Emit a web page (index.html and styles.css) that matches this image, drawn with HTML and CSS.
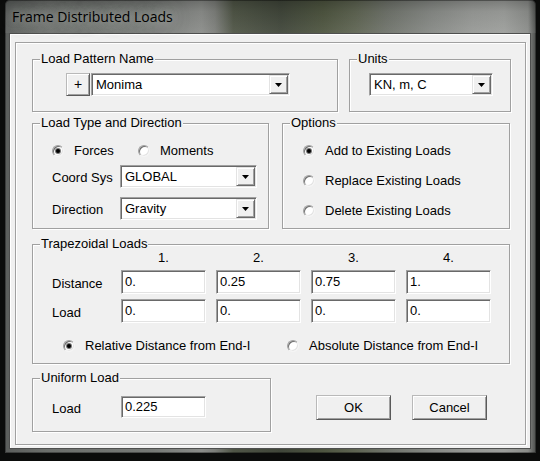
FILE: index.html
```html
<!DOCTYPE html>
<html>
<head>
<meta charset="utf-8">
<title>Frame Distributed Loads</title>
<link rel="stylesheet" href="styles.css">
</head>
<body>
<div class="window">
  <div class="titlebar"><span class="title">Frame Distributed Loads</span></div>
  <div class="client">
    <div class="panel">
      <div class="row row1">
        <div class="group g-pattern">
          <span class="glabel">Load Pattern Name</span>
          <div class="pattern-row">
            <button class="btn plus">+</button>
            <div class="combo c-pattern"><span class="ctext">Monima</span><span class="dd"><svg width="7" height="4" viewBox="0 0 7 4"><polygon points="0,0 7,0 3.5,4" fill="#000"/></svg></span></div>
          </div>
        </div>
        <div class="group g-units">
          <span class="glabel">Units</span>
          <div class="combo c-units"><span class="ctext">KN, m, C</span><span class="dd"><svg width="7" height="4" viewBox="0 0 7 4"><polygon points="0,0 7,0 3.5,4" fill="#000"/></svg></span></div>
        </div>
      </div>

      <div class="row row2">
        <div class="group g-type">
          <span class="glabel">Load Type and Direction</span>
          <div class="radio-line">
            <div class="radio r-forces"><span class="rb on"></span><span>Forces</span></div>
            <div class="radio"><span class="rb"></span><span>Moments</span></div>
          </div>
          <div class="form-row fr-coord">
            <span class="flabel">Coord Sys</span>
            <div class="combo c-small"><span class="ctext">GLOBAL</span><span class="dd"><svg width="7" height="4" viewBox="0 0 7 4"><polygon points="0,0 7,0 3.5,4" fill="#000"/></svg></span></div>
          </div>
          <div class="form-row fr-dir">
            <span class="flabel">Direction</span>
            <div class="combo c-small"><span class="ctext">Gravity</span><span class="dd"><svg width="7" height="4" viewBox="0 0 7 4"><polygon points="0,0 7,0 3.5,4" fill="#000"/></svg></span></div>
          </div>
        </div>
        <div class="group g-options">
          <span class="glabel">Options</span>
          <div class="radio-col">
            <div class="radio"><span class="rb on"></span><span>Add to Existing Loads</span></div>
            <div class="radio"><span class="rb"></span><span>Replace Existing Loads</span></div>
            <div class="radio"><span class="rb"></span><span>Delete Existing Loads</span></div>
          </div>
        </div>
      </div>

      <div class="group g-trap">
        <span class="glabel">Trapezoidal Loads</span>
        <div class="trap-grid">
          <span></span>
          <span class="colhead">1.</span>
          <span class="colhead">2.</span>
          <span class="colhead">3.</span>
          <span class="colhead">4.</span>
          <span class="flabel">Distance</span>
          <span class="field">0.</span>
          <span class="field">0.25</span>
          <span class="field">0.75</span>
          <span class="field">1.</span>
          <span class="flabel flabel-low">Load</span>
          <span class="field">0.</span>
          <span class="field">0.</span>
          <span class="field">0.</span>
          <span class="field">0.</span>
        </div>
        <div class="radio-line trap-radios">
          <div class="radio r-rel"><span class="rb on"></span><span>Relative Distance from End-I</span></div>
          <div class="radio"><span class="rb"></span><span>Absolute Distance from End-I</span></div>
        </div>
      </div>

      <div class="row row4">
        <div class="group g-uniform">
          <span class="glabel">Uniform Load</span>
          <div class="form-row">
            <span class="flabel flabel-low">Load</span>
            <span class="field field-short">0.225</span>
          </div>
        </div>
        <div class="buttons">
          <button class="btn action">OK</button>
          <button class="btn action">Cancel</button>
        </div>
      </div>
    </div>
  </div>
</div>
</body>
</html>
```

FILE: styles.css
```css
* {
  box-sizing: border-box;
}

html, body {
  margin: 0;
  padding: 0;
}

body {
  background: #0b0c0b;
  width: 540px;
  height: 461px;
  overflow: hidden;
  font-family: "Liberation Sans", Arial, sans-serif;
  font-size: 13px;
  color: #000;
}

.window {
  margin-left: 5px;
  width: 531px;
  height: 453px;
  padding: 0 5px 4px 4px;
  border-radius: 5px 5px 0 0;
  background: linear-gradient(to right,
    #5b5e5c 0%, #6c6f6c 8%, #777a77 28%, #8a8c89 37%, #7c7e7a 39.5%,
    #4f5546 43%, #40463a 52%, #4e5540 60%, #5e6452 66%, #6f736b 72%,
    #858884 80%, #979996 88%, #9c9e9b 94%, #8a8c89 98.5%, #4a4c4a 100%);
  box-shadow: inset 0 0 0 1px rgba(0, 0, 0, 0.35);
}

.titlebar {
  height: 33px;
  margin: 0 -5px 0 -4px;
  padding: 7px 0 0 7px;
  background: linear-gradient(to bottom, rgba(0,0,0,0.22) 0%, rgba(0,0,0,0.05) 35%, rgba(255,255,255,0.06) 100%);
}

.title {
  font-family: "Open Sans", "Noto Sans", sans-serif;
  font-size: 14px;
  line-height: 19px;
  color: #000;
  text-shadow: 0 0 10px rgba(200, 202, 200, 0.85), 0 0 18px rgba(190, 192, 190, 0.6);
}

.client {
  height: 416px;
  border: 1px solid #4e4f4e;
  background: #f0f0f0;
  box-shadow: inset 1px 1px 0 #fff;
  padding: 8px 4px 3px 5px;
}

.panel {
  width: 511px;
  height: 403px;
  border: 1px solid #a0a0a0;
  box-shadow: inset 1px 1px 0 #fff, 1px 1px 0 #fff;
  padding: 16px 0 0 16px;
}

.row {
  display: flex;
  align-items: flex-start;
}

.row1 { gap: 11px; }
.row2 { gap: 13px; margin-top: 11px; }
.row4 { margin-top: 14px; }

.group {
  position: relative;
  border: 1px solid #a0a0a0;
  box-shadow: inset 1px 1px 0 #fff, 1px 1px 0 #fff;
}

.glabel {
  position: absolute;
  top: -9px;
  left: 7px;
  padding: 0 1px;
  background: #f0f0f0;
  line-height: 15px;
  white-space: nowrap;
}

/* Load pattern */
.g-pattern {
  width: 306px;
  height: 53px;
  padding: 13px 0 0 33px;
}

.pattern-row {
  display: flex;
  gap: 1px;
}

.g-units {
  width: 162px;
  height: 53px;
  padding: 13px 0 0 19px;
}

/* Buttons */
.btn {
  font-family: "Liberation Sans", Arial, sans-serif;
  font-size: 13px;
  color: #000;
  background: #f0f0f0;
  margin: 0;
  padding: 0;
  border: 1px solid;
  border-color: #b9b9b9 #5a5a5a #5a5a5a #b9b9b9;
  box-shadow: inset 1px 1px 0 #fff, inset -1px -1px 0 #a0a0a0;
  border-radius: 0;
  display: flex;
  align-items: center;
  justify-content: center;
}

.plus {
  width: 24px;
  height: 23px;
  font-size: 14px;
  line-height: 1;
  padding-bottom: 1px;
}

/* Combo boxes */
.combo {
  display: flex;
  height: 23px;
  border: 1px solid;
  border-color: #a0a0a0 #fff #fff #a0a0a0;
  box-shadow: inset 1px 1px 0 #696969, inset -1px -1px 0 #e3e3e3;
  background: #fff;
  padding: 1px;
}

.c-pattern { width: 199px; }
.c-units { width: 124px; }
.c-small { width: 137px; }

.ctext {
  flex: 1;
  line-height: 19px;
  padding-left: 3px;
  white-space: nowrap;
  overflow: hidden;
}

.dd {
  width: 19px;
  height: 19px;
  background: #f0f0f0;
  border: 1px solid;
  border-color: #e3e3e3 #696969 #696969 #e3e3e3;
  box-shadow: inset 1px 1px 0 #fff, inset -1px -1px 0 #a0a0a0;
  display: flex;
  align-items: center;
  justify-content: center;
}

.dd svg {
  display: block;
  margin-top: 1px;
}

/* Radios */
.radio {
  display: flex;
  align-items: center;
  gap: 10px;
  height: 16px;
  line-height: 16px;
  white-space: nowrap;
}

.rb {
  width: 12px;
  height: 12px;
  flex: none;
  border-radius: 50%;
  background: #fff;
  border: 1px solid;
  border-color: #a0a0a0 #f4f4f4 #f4f4f4 #a0a0a0;
  box-shadow: inset 1px 1px 0 #6e6e6e, inset -1px -1px 0 #e3e3e3;
  display: flex;
  align-items: center;
  justify-content: center;
}

.rb.on::after {
  content: "";
  width: 4px;
  height: 4px;
  border-radius: 50%;
  background: #000;
  box-shadow: 0 0 0 1px rgba(0, 0, 0, 0.55);
}

.radio-line {
  display: flex;
}

/* Load type */
.g-type {
  width: 237px;
  height: 106px;
  padding: 19px 0 0 19px;
}

.r-forces { width: 86px; }

.form-row {
  display: flex;
  align-items: center;
}

.fr-coord { margin-top: 6px; }
.fr-dir { margin-top: 9px; }

.flabel {
  width: 68px;
  flex: none;
  line-height: 15px;
  padding-top: 2px;
  white-space: nowrap;
}

.flabel-low { padding-top: 3px; }

/* Options */
.g-options {
  width: 228px;
  height: 106px;
  padding: 19px 0 0 20px;
}

.radio-col {
  display: flex;
  flex-direction: column;
  gap: 14px;
}

/* Trapezoidal */
.g-trap {
  width: 478px;
  height: 120px;
  margin-top: 15px;
  padding: 5px 0 0 19px;
}

.trap-grid {
  display: grid;
  grid-template-columns: 69px repeat(4, 95px);
  grid-template-rows: 15px 24px 24px;
  row-gap: 5px;
  align-items: center;
}

.trap-grid .flabel {
  width: auto;
}

.colhead {
  width: 85px;
  text-align: center;
  line-height: 15px;
}

.field {
  display: block;
  width: 85px;
  height: 24px;
  border: 1px solid;
  border-color: #a0a0a0 #fff #fff #a0a0a0;
  box-shadow: inset 1px 1px 0 #696969, inset -1px -1px 0 #e3e3e3;
  background: #fff;
  padding: 0 3px;
  line-height: 22px;
  white-space: nowrap;
}

.trap-radios {
  margin-top: 15px;
  padding-left: 11px;
}

.r-rel { width: 224px; }

/* Uniform */
.g-uniform {
  width: 239px;
  height: 54px;
  padding: 17px 0 0 19px;
}

.g-uniform .flabel { width: 69px; }

.field-short {
  height: 22px;
  line-height: 20px;
}

.buttons {
  display: flex;
  gap: 21px;
  margin: 17px 0 0 45px;
}

.action {
  width: 75px;
  height: 25px;
}
```
